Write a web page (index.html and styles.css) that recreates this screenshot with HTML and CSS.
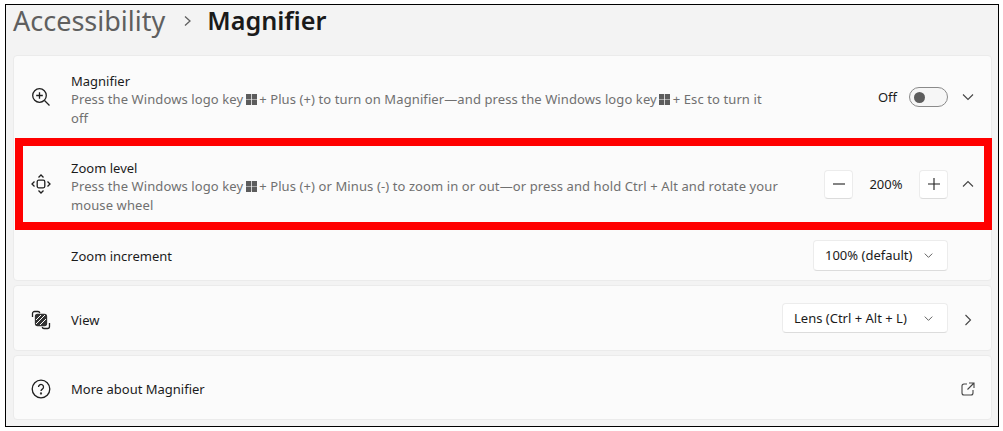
FILE: index.html
```html
<!DOCTYPE html>
<html lang="en">
<head>
    <meta charset="UTF-8">
    <meta name="viewport" content="width=device-width, initial-scale=1.0">
    <title>Magnifier</title>
    <link rel="stylesheet" href="styles.css">
</head>
<body>
    <svg class="defs" width="0" height="0">
        <symbol id="win" viewBox="0 0 12 12"><path d="M0 0h5.600v5.600H0zM6.400 0H12v5.600H6.400zM0 6.400h5.600V12H0zM6.400 6.400H12V12H6.400z"/></symbol>
        <symbol id="down" viewBox="0 0 12 12"><path d="M1 3.500l5 5 5-5"/></symbol>
    </svg>
    <div class="frame">
        <header class="crumb">
            <span class="crumb-parent">Accessibility</span>
            <svg class="crumb-sep" viewBox="0 0 10 12"><path d="M2 1.500l5 4.500-5 4.500"/></svg>
            <span class="crumb-current">Magnifier</span>
        </header>

        <section class="card">
            <div class="row row-magnifier">
                <svg class="icon" viewBox="0 0 20 20">
                    <circle cx="8.500" cy="8.500" r="6.800"/>
                    <path d="M13.500 13.500l5 5M8.500 5.200v6.600M5.200 8.500h6.600"/>
                </svg>
                <div class="text">
                    <p class="name">Magnifier</p>
                    <p class="desc">Press the Windows logo key <svg class="win"><use href="#win"/></svg> + Plus (+) to turn on Magnifier—and press the Windows logo key <svg class="win"><use href="#win"/></svg> + Esc to turn it <span>off</span></p>
                </div>
                <div class="controls">
                    <span class="label">Off</span>
                    <span class="toggle"><span class="knob"></span></span>
                </div>
                <svg class="chevron" viewBox="0 0 12 12"><use href="#down"/></svg>
            </div>

            <div class="row row-zoom">
                <svg class="icon" viewBox="0 0 20 20">
                    <rect x="6.200" y="6.200" width="7.600" height="7.600" rx="1.500"/>
                    <path d="M7.500 3.500L10 1l2.500 2.500M7.500 16.500L10 19l2.500-2.500M3.500 7.500L1 10l2.500 2.500M16.500 7.500L19 10l-2.500 2.500"/>
                </svg>
                <div class="text">
                    <p class="name">Zoom level</p>
                    <p class="desc">Press the Windows logo key <svg class="win"><use href="#win"/></svg> + Plus (+) or Minus (-) to zoom in or out—or press and hold Ctrl + Alt and rotate your <span>mouse wheel</span></p>
                </div>
                <div class="controls">
                    <button class="step"><svg viewBox="0 0 14 14"><path d="M1 7h12"/></svg></button>
                    <span class="value">200%</span>
                    <button class="step"><svg viewBox="0 0 14 14"><path d="M1 7h12M7 1v12"/></svg></button>
                </div>
                <svg class="chevron" viewBox="0 0 12 12"><path d="M1 8.500l5-5 5 5"/></svg>
            </div>

            <div class="row row-sub">
                <p class="name">Zoom increment</p>
                <div class="controls">
                    <button class="select select-increment">100% (default) <svg viewBox="0 0 12 12"><use href="#down"/></svg></button>
                </div>
            </div>
        </section>

        <section class="card">
            <div class="row row-link">
                <svg class="icon" viewBox="0 0 20 20">
                    <path d="M1.500 7V3.500a2 2 0 0 1 2-2H7a2 2 0 0 1 1.800 1.500M18.500 13v3.500a2 2 0 0 1-2 2H13a2 2 0 0 1-1.800-1.500"/>
                    <rect class="solid" x="4.500" y="4.500" width="11" height="11" rx="2"/>
                    <path class="hatch" d="M5 10l5-5M5 14l9-9M9 15l6-6"/>
                </svg>
                <div class="text"><p class="name">View</p></div>
                <div class="controls">
                    <button class="select select-view">Lens (Ctrl + Alt + L) <svg viewBox="0 0 12 12"><use href="#down"/></svg></button>
                </div>
                <svg class="chevron" viewBox="0 0 12 12"><path d="M3.500 1l5 5-5 5"/></svg>
            </div>
        </section>

        <section class="card">
            <div class="row row-link">
                <svg class="icon" viewBox="0 0 20 20">
                    <circle cx="10" cy="10" r="8.800"/>
                    <path d="M7.500 8a2.500 2.500 0 1 1 3.800 2.100c-.9.600-1.300 1-1.300 2"/>
                    <circle class="solid" cx="10" cy="14.500" r=".5"/>
                </svg>
                <div class="text"><p class="name">More about Magnifier</p></div>
                <svg class="chevron chevron-open" viewBox="0 0 14 14">
                    <path d="M6 2H3a2 2 0 0 0-2 2v7a2 2 0 0 0 2 2h7a2 2 0 0 0 2-2V8M8 1h5v5M13 1L6.500 7.500"/>
                </svg>
            </div>
        </section>
    </div>
</body>
</html>
```

FILE: styles.css
```css
*{
    margin: 0;
    padding: 0;
    box-sizing: border-box;
}
body{
    background: #fff;
    font-family: "Noto Sans", sans-serif;
    color: #1b1b1b;
    padding: 4px 4px 4px 5px;
}
.defs{
    position: absolute;
}
.frame{
    height: 423px;
    background: #f3f3f3;
    border: 1px solid #000;
    padding: 0 6px 0 7px;
}
.crumb{
    display: flex;
    align-items: center;
    height: 50px;
    padding-bottom: 19px;
}
.crumb-parent{
    font-size: 27px;
    line-height: 31px;
    color: #5f5f5f;
}
.crumb-sep{
    width: 10px;
    height: 12px;
    margin: 0 14px 0 18px;
    fill: none;
    stroke: #5f5f5f;
    stroke-width: 1.300;
}
.crumb-current{
    font-size: 25.200px;
    line-height: 31px;
    font-weight: 600;
    color: #1a1a1a;
}
.card{
    background: #fbfbfb;
    border: 1px solid #ebebeb;
    border-radius: 4px;
    margin-bottom: 4px;
}
.card:last-child .row{
    height: 63px;
}
.row{
    display: flex;
    align-items: center;
    padding: 0 13px 0 17px;
}
.row-magnifier{
    height: 82px;
}
.row-zoom{
    height: 92px;
    margin-left: 1px;
    margin-right: -1px;
    border: 8px solid #f00;
    padding: 0 6px 0 8px;
}
.row-sub{
    height: 50px;
    padding-left: 57px;
    justify-content: space-between;
    padding-right: 43px;
}
.row-sub .name{
    padding-top: 2px;
}
.row-link{
    height: 64px;
    padding-top: 3px;
}
.icon{
    width: 20px;
    height: 20px;
    flex: none;
    margin-right: 20px;
    fill: none;
    stroke: #1f1f1f;
    stroke-width: 1.300;
}
.icon .solid{
    fill: #333;
    stroke: #333;
}
.icon .hatch{
    stroke: #fbfbfb;
    stroke-width: 1;
}
.text{
    flex: 1;
}
.row-magnifier .text, .row-zoom .text{
    padding-top: 6px;
}
.name{
    font-size: 13px;
    line-height: 18px;
}
.desc{
    font-size: 13px;
    line-height: 19px;
    letter-spacing: 0.100px;
    color: #707070;
    max-width: 710px;
}
.win{
    width: 11px;
    height: 11px;
    margin: 0 -1px 0 -1px;
    vertical-align: -1px;
    fill: #5c5c5c;
}
.controls{
    display: flex;
    align-items: center;
    flex: none;
}
.label{
    font-size: 13px;
    margin-right: 12px;
}
.toggle{
    display: flex;
    align-items: center;
    width: 39px;
    height: 20px;
    padding-left: 4px;
    background: #f6f6f6;
    border: 1px solid #8a8a8a;
    border-radius: 10px;
}
.knob{
    width: 11px;
    height: 11px;
    background: #5d5d5d;
    border-radius: 50%;
}
.step{
    display: flex;
    align-items: center;
    justify-content: center;
    width: 29px;
    height: 29px;
    background: #fff;
    border: 1px solid #ececec;
    border-bottom-color: #dcdcdc;
    border-radius: 4px;
}
.step svg{
    width: 14px;
    height: 14px;
    fill: none;
    stroke: #1f1f1f;
    stroke-width: 1.100;
}
.value{
    width: 66px;
    text-align: center;
    font-size: 13px;
}
.select{
    display: flex;
    align-items: center;
    justify-content: space-between;
    height: 31px;
    padding: 0 14px 0 11px;
    background: #fff;
    border: 1px solid #ececec;
    border-bottom-color: #dcdcdc;
    border-radius: 4px;
    font: inherit;
    font-size: 13px;
    color: #1b1b1b;
}
.select svg{
    width: 9px;
    height: 9px;
    fill: none;
    stroke: #5f5f5f;
    stroke-width: 1.300;
}
.select-increment{
    width: 135px;
}
.select-view{
    width: 166px;
    height: 30px;
    margin-bottom: 3px;
}
.chevron{
    width: 12px;
    height: 12px;
    flex: none;
    margin: 0 4px 0 14px;
    fill: none;
    stroke: #444;
    stroke-width: 1.100;
}
.chevron-open{
    width: 14px;
    height: 14px;
    margin-right: 3px;
}
```
